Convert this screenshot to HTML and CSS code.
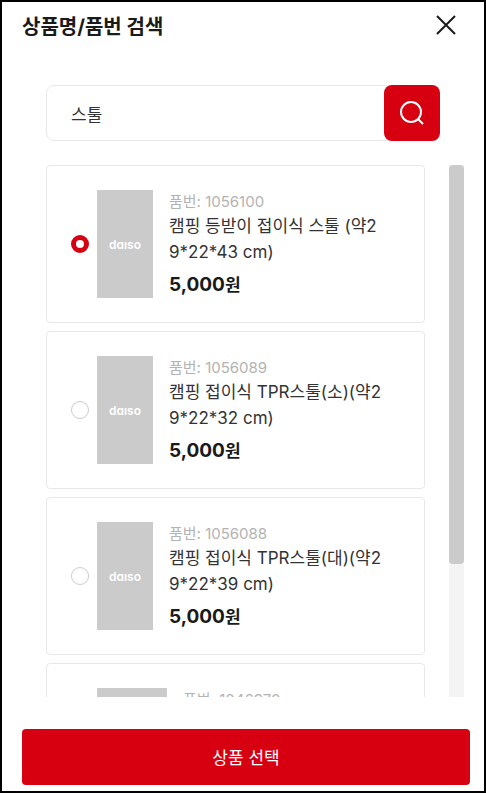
FILE: index.html
```html
<!DOCTYPE html>
<html lang="ko">
<head>
    <meta charset="UTF-8">
    <meta name="viewport" content="width=device-width, initial-scale=1">
    <title>상품명/품번 검색</title>
    <link rel="stylesheet" href="styles.css">
</head>
<body>
<div class="popup">
    <header class="popup-header">
        <h1>상품명/품번 검색</h1>
        <button type="button" class="btn-close" aria-label="닫기">
            <svg width="20" height="20" viewBox="0 0 20 20"><path d="M1 1l18 18M19 1L1 19"/></svg>
        </button>
    </header>

    <form class="search-form">
        <input class="search-input" type="text" value="스툴" aria-label="상품명/품번">
        <button type="submit" class="btn-search" aria-label="검색">
            <svg width="26" height="26" viewBox="0 0 26 26"><circle cx="12" cy="12" r="10"/><path d="M19 19l5 5"/></svg>
        </button>
    </form>

    <!-- Product list -->
    <div class="list-wrap">
        <div class="product-list">
            <label class="product">
                <input type="radio" name="product" checked>
                <span class="thumb">daıso</span>
                <span class="info">
                    <span class="code">품번: 1056100</span>
                    <span class="name">캠핑 등받이 접이식 스툴 (약29*22*43 cm)</span>
                    <span class="price">5,000<span class="won">원</span></span>
                </span>
            </label>
            <label class="product">
                <input type="radio" name="product">
                <span class="thumb">daıso</span>
                <span class="info">
                    <span class="code">품번: 1056089</span>
                    <span class="name">캠핑 접이식 TPR스툴(소)(약29*22*32 cm)</span>
                    <span class="price">5,000<span class="won">원</span></span>
                </span>
            </label>
            <label class="product">
                <input type="radio" name="product">
                <span class="thumb">daıso</span>
                <span class="info">
                    <span class="code">품번: 1056088</span>
                    <span class="name">캠핑 접이식 TPR스툴(대)(약29*22*39 cm)</span>
                    <span class="price">5,000<span class="won">원</span></span>
                </span>
            </label>
            <label class="product product-tall">
                <input type="radio" name="product">
                <span class="thumb thumb-wide"></span>
                <span class="info">
                    <span class="code">품번: 1046970</span>
                </span>
            </label>
        </div>
        <div class="scrollbar"><div class="scrollbar-thumb"></div></div>
    </div>

    <button type="button" class="btn-select">상품 선택</button>
</div>
</body>
</html>
```

FILE: styles.css
```css
* { box-sizing: border-box; }
body { margin: 0; font-family: Inter, "Noto Sans CJK KR", sans-serif; color: #1a1a1a; background: #fff; }
button { border: none; cursor: pointer; font-family: inherit; }
svg { display: block; fill: none; stroke-width: 2; }

.popup { display: flex; flex-direction: column; height: 100vh; padding: 10px 14px 6px 20px; border: 2px solid #000; }
.popup-header { display: flex; justify-content: space-between; align-items: center; height: 30px; padding-right: 14px; }
h1 { margin: 0; font-size: 20px; line-height: 30px; font-weight: 700; }
.btn-close { padding: 0 0 4px; background: none; stroke: #1a1a1a; }

.search-form { display: flex; margin: 43px 30px 24px 24px; }
.search-input { flex: 1; min-width: 0; height: 56px; margin-right: -8px; padding: 0 24px; border: 1px solid #e8e8e8; border-radius: 8px; font-family: inherit; font-size: 17px; color: #333; outline: none; }
.btn-search { position: relative; display: flex; align-items: center; justify-content: center; width: 56px; height: 56px; padding: 0; border-radius: 8px; background: #d70011; stroke: #fff; }

.list-wrap { flex: 1; min-height: 0; display: flex; gap: 24px; margin: 0 6px 32px 24px; }
.product-list { flex: 1; min-width: 0; overflow-y: auto; scrollbar-width: none; padding-bottom: 24px; }
.scrollbar { width: 15px; background: #f4f4f4; }
.scrollbar-thumb { height: 75%; background: #cbcbcb; border-radius: 4px; }

.product { display: flex; align-items: center; min-height: 158px; margin-bottom: 8px; padding: 24px 40px 24px 24px; border: 1px solid #e8e8e8; border-radius: 4px; cursor: pointer; }
.product-tall { min-height: 184px; margin-bottom: 0; }
.product input { appearance: none; flex: none; width: 18px; height: 18px; margin: 0 8px 0 0; border: 1px solid #ccc; border-radius: 50%; background: #fff; }
.product input:checked { border: 5px solid #d70011; }
.thumb { display: flex; align-items: center; justify-content: center; flex: none; align-self: stretch; width: 56px; margin-right: 16px; background: #cbcbcb; color: #fff; font-size: 12px; font-weight: 600; font-feature-settings: "cv11"; }
.thumb-wide { width: 70px; }

.info { flex: 1; min-width: 0; align-self: flex-start; padding-top: 1px; word-break: break-all; }
.info > span { display: block; }
.code { font-size: 15px; line-height: 22px; color: #b3b3b3; }
.name { font-size: 17px; line-height: 26px; color: #333; }
.info .price { margin-top: 8px; font-size: 19px; line-height: 24px; font-weight: 700; }
.won { font-size: 17px; }

.btn-select { flex: none; height: 56px; padding: 0 0 2px; border-radius: 4px; background: #d70011; color: #fff; font-size: 17px; }
```
